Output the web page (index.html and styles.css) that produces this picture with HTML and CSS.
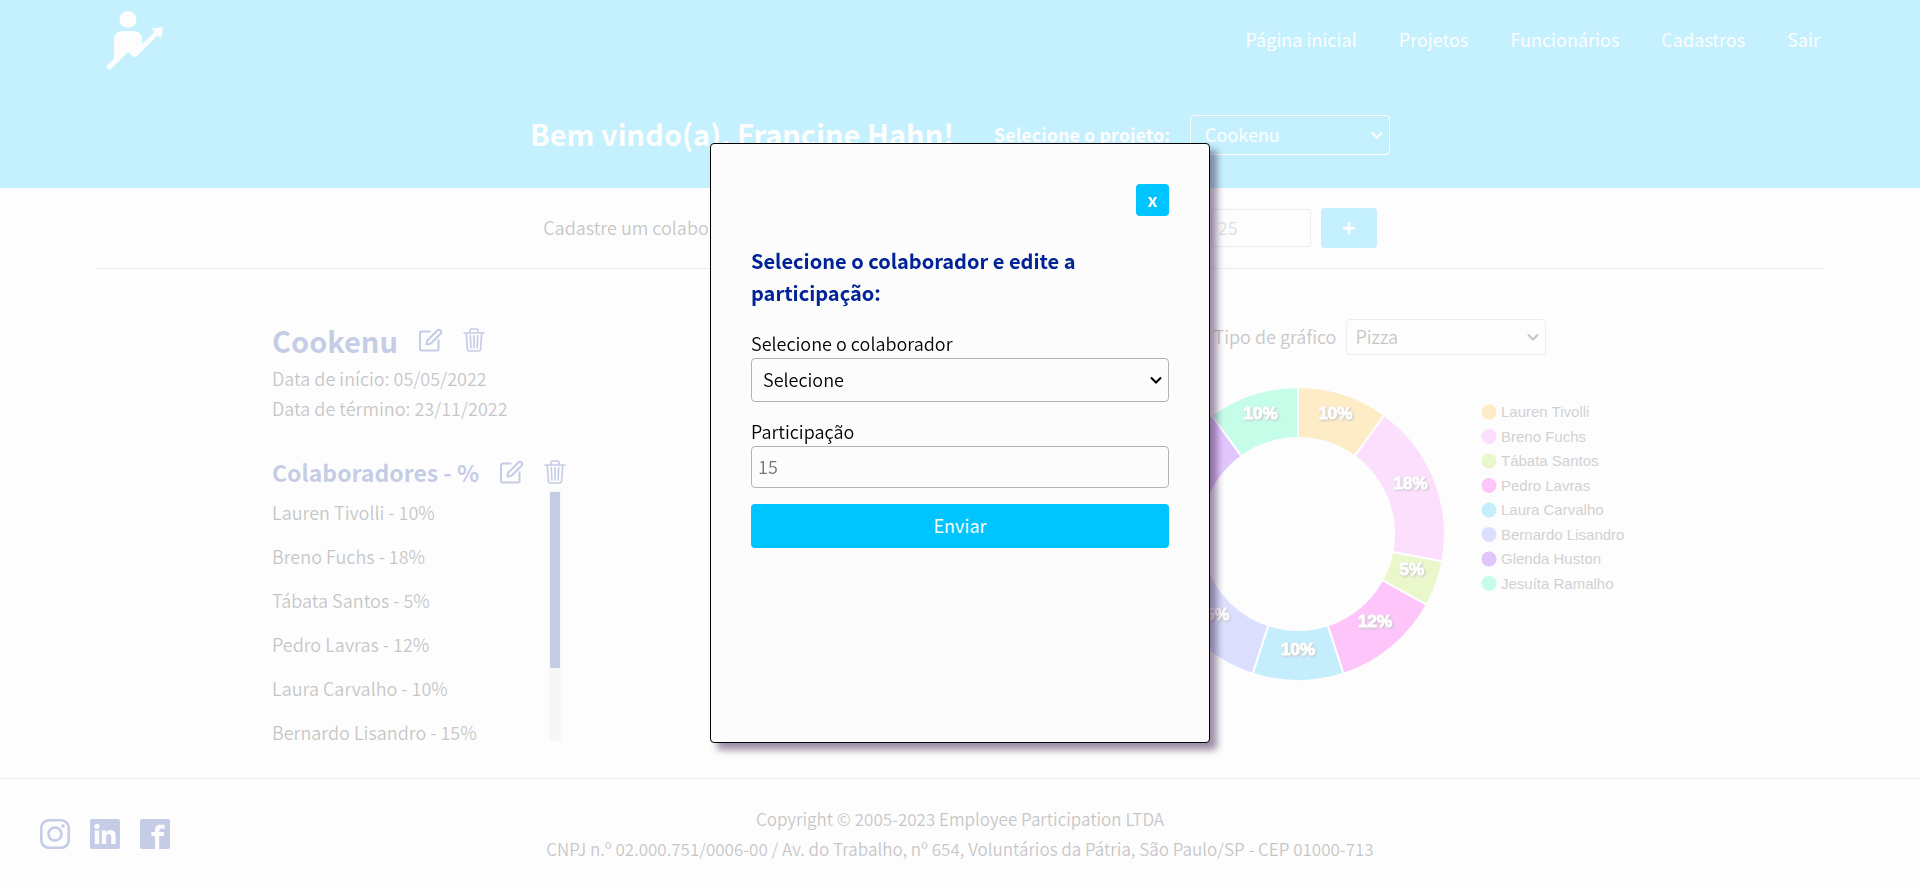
FILE: index.html
```html
<!DOCTYPE html>
<html lang="pt-BR">
<head>
<meta charset="utf-8">
<meta name="viewport" content="width=device-width, initial-scale=1">
<title>Employee Participation</title>
<link rel="stylesheet" href="styles.css">
</head>
<body>
<svg class="sprite" aria-hidden="true">
  <symbol id="edit" viewBox="0 0 24 24">
    <path d="M12.500 3.500H3.500A1.500 1.500 0 0 0 2 5V21A1.500 1.500 0 0 0 3.500 22.500H19A1.500 1.500 0 0 0 20.500 21V11.500M8.500 16.500L9.300 12.500L19.300 2.500A2.200 2.200 0 0 1 22.500 5.700L12.500 15.700Z" fill="none" stroke="currentColor" stroke-width="2" stroke-linejoin="round"/>
  </symbol>
  <symbol id="trash" viewBox="0 0 24 24">
    <path d="M2 5H22M8 5V2.500A1.500 1.500 0 0 1 9.500 1H14.500A1.500 1.500 0 0 1 16 2.500V5M4.300 5L5.400 21A2.100 2.100 0 0 0 7.500 23H16.500A2.100 2.100 0 0 0 18.600 21L19.700 5M8.300 7.800L8.900 20M12 7.800V20M15.700 7.800L15.100 20" fill="none" stroke="currentColor" stroke-width="1.600" stroke-linecap="round"/>
  </symbol>
</svg>

<div class="page">
  <header class="header">
    <div class="topbar">
      <svg class="logo" viewBox="0 0 66 66" role="img" aria-label="Employee Participation">
        <circle cx="28" cy="15.500" r="8.500"/>
        <path d="M14 36Q14 27 23 27H33Q42 27 42 36V40L54.500 28L51.500 24.500L63 23L61 34L57.500 31.500L37 52Q34.500 54 32 51.500L28 48L11 65Q8 66 7 64Q6 62 8 60L14 55Z"/>
      </svg>
      <nav class="nav">
        <a href="#">Página inicial</a>
        <a href="#">Projetos</a>
        <a href="#">Funcionários</a>
        <a href="#">Cadastros</a>
        <a href="#">Sair</a>
      </nav>
    </div>
    <div class="welcome">
      <h1>Bem vindo(a), Francine Hahn!</h1>
      <div class="project-picker">
        <label for="project">Selecione o projeto:</label>
        <select id="project"><option>Cookenu</option></select>
      </div>
    </div>
  </header>

  <form class="register">
    <label for="employee">Cadastre um colaborador no projeto:</label>
    <select id="employee"><option>Selecione</option></select>
    <input type="text" placeholder="25" aria-label="Participação em %">
    <button type="button">+</button>
  </form>

  <main class="main">
    <section class="details">
      <div class="title-row">
        <h2>Cookenu</h2>
        <button type="button" class="icon-button" aria-label="Editar projeto"><svg><use href="#edit"/></svg></button>
        <button type="button" class="icon-button" aria-label="Excluir projeto"><svg><use href="#trash"/></svg></button>
      </div>
      <p>Data de início: 05/05/2022</p>
      <p>Data de término: 23/11/2022</p>
      <div class="title-row team-title">
        <h3>Colaboradores - %</h3>
        <button type="button" class="icon-button" aria-label="Editar colaborador"><svg><use href="#edit"/></svg></button>
        <button type="button" class="icon-button" aria-label="Excluir colaborador"><svg><use href="#trash"/></svg></button>
      </div>
      <div class="team-box">
        <ul class="team">
          <li>Lauren Tivolli - 10%</li>
          <li>Breno Fuchs - 18%</li>
          <li>Tábata Santos - 5%</li>
          <li>Pedro Lavras - 12%</li>
          <li>Laura Carvalho - 10%</li>
          <li>Bernardo Lisandro - 15%</li>
          <li>Glenda Huston - 20%</li>
          <li>Jesuíta Ramalho - 10%</li>
        </ul>
        <div class="track" aria-hidden="true"><div class="thumb"></div></div>
      </div>
    </section>

    <section class="chart">
      <div class="chart-picker">
        <label for="chart-type">Tipo de gráfico</label>
        <select id="chart-type"><option>Pizza</option></select>
      </div>
      <svg class="donut" viewBox="0 0 536 300" role="img" aria-label="Participação por colaborador">
        <g class="slices" id="slices"></g>
        <g class="values" id="values"></g>
        <g class="legend" id="legend"></g>
      </svg>
    </section>
  </main>

  <footer class="footer">
    <div class="social">
      <a href="#" aria-label="Instagram"><svg viewBox="0 0 30 30"><rect x="1.300" y="1.300" width="27.400" height="27.400" rx="7.500" fill="none" stroke="currentColor" stroke-width="2.600"/><circle cx="15" cy="15" r="6.500" fill="none" stroke="currentColor" stroke-width="2.600"/><circle cx="23" cy="7" r="1.800" fill="currentColor"/></svg></a>
      <a href="#" aria-label="LinkedIn"><svg viewBox="0 0 30 30"><rect width="30" height="30" rx="2" fill="currentColor"/><g class="cut"><circle cx="7" cy="7.300" r="2.600"/><path d="M4.800 11.500H9.200V25H4.800ZM11.800 11.500H16V13.400C17.200 11.600 18.600 11.100 20.300 11.100C24.600 11.100 25.600 13.900 25.600 17.600V25H21.200V18.400C21.200 16.600 21 14.900 18.900 14.900C16.700 14.900 16.200 16.500 16.200 18.300V25H11.800Z"/></g></svg></a>
      <a href="#" aria-label="Facebook"><svg viewBox="0 0 30 30"><rect width="30" height="30" rx="2" fill="currentColor"/><path class="cut" d="M15 30V17H11.300V13H15V11C15 7.500 17.100 5.800 20.700 5.800H24.600V9.800H21.500C19.700 9.800 19.200 10.400 19.200 11.800V13H24.300L23.700 17H19.200V30Z"/></svg></a>
    </div>
    <div class="legal">
      <p>Copyright © 2005-2023 Employee Participation LTDA</p>
      <p>CNPJ n.º 02.000.751/0006-00 / Av. do Trabalho, nº 654, Voluntários da Pátria, São Paulo/SP - CEP 01000-713</p>
    </div>
  </footer>
</div>

<div class="backdrop">
  <form class="modal" role="dialog" aria-modal="true" aria-labelledby="modal-title">
    <button type="button" class="close" aria-label="Fechar">x</button>
    <h4 id="modal-title">Selecione o colaborador e edite a participação:</h4>
    <div class="field">
      <label for="modal-employee">Selecione o colaborador</label>
      <select id="modal-employee"><option>Selecione</option></select>
    </div>
    <div class="field">
      <label for="modal-share">Participação</label>
      <input id="modal-share" type="text" placeholder="15">
    </div>
    <button type="button" class="submit">Enviar</button>
  </form>
</div>
<script src="chart.js"></script>
</body>
</html>
```

FILE: styles.css
```css
:root {
  --blue: #00c4fd;
  --navy: #002396;
  --paper: #fcfcfc;
  --line: #b3b3b3;
}
* { box-sizing: border-box; margin: 0; padding: 0; }
body {
  background: var(--paper);
  color: #000;
  font: 350 18px/30px "Noto Sans CJK SC", sans-serif;
}
button, input, select { font: inherit; color: inherit; }
button { padding-bottom: 2px; border: 0; border-radius: 4px; background: var(--blue); color: var(--paper); }
input, select {
  border: 1px solid var(--line);
  border-radius: 4px;
  background: transparent;
}
input { padding: 0 6px 2px; }
input::placeholder { color: #757575; opacity: 1; }
select {
  padding: 0 24px 2px 8px;
  appearance: none;
  background: url("data:image/svg+xml,%3Csvg xmlns='http://www.w3.org/2000/svg' viewBox='0 0 12 8'%3E%3Cpath d='M1 1.500L6 6.500L11 1.500' fill='none' stroke='black' stroke-width='2'/%3E%3C/svg%3E") no-repeat right 6px center / 12px 8px;
}
a { color: inherit; text-decoration: none; }
.sprite { display: none; }

.page { display: flex; flex-direction: column; min-height: 100vh; }

.header { background: var(--blue); color: #fff; padding: 4px 5% 33px; }
.topbar { display: flex; align-items: center; justify-content: space-between; padding: 0 4px; }
.logo { width: 66px; height: 66px; fill: #fff; }
.nav { display: flex; gap: 42px; padding-top: 4px; font-weight: 400; }
.welcome { display: flex; justify-content: center; align-items: center; gap: 40px; margin-top: 45px; }
.welcome h1 { padding-bottom: 4px; font-size: 29px; line-height: 36px; }
.project-picker { display: flex; align-items: center; gap: 20px; font-weight: 700; }
.project-picker label { line-height: 28px; padding-bottom: 2px; }
.project-picker select {
  width: 200px;
  height: 40px;
  padding-left: 14px;
  border-color: #fff;
  font-weight: 400;
  background-image: url("data:image/svg+xml,%3Csvg xmlns='http://www.w3.org/2000/svg' viewBox='0 0 12 8'%3E%3Cpath d='M1 1.500L6 6.500L11 1.500' fill='none' stroke='white' stroke-width='2'/%3E%3C/svg%3E");
}
.project-picker option { color: #000; }

.register {
  display: flex;
  justify-content: center;
  align-items: center;
  gap: 10px;
  width: 90%;
  margin: 0 auto;
  padding: 20px 0;
  border-bottom: 1px solid var(--line);
}
.register label { line-height: 28px; padding-bottom: 2px; }
.register select { width: 342px; height: 38px; }
.register input { width: 100px; height: 38px; }
.register button { width: 56px; height: 40px; font-size: 23px; font-weight: 700; }

.main {
  display: flex;
  justify-content: space-between;
  flex: 1;
  width: 100%;
  max-width: 1376px;
  margin: 0 auto;
  padding: 48px 0 36px;
}
.title-row { display: flex; align-items: center; gap: 20px; color: var(--navy); }
.title-row h2 { font-size: 29px; line-height: 46px; }
.title-row h3 { font-size: 23px; line-height: 38px; }
.team-title { margin-top: 30px; }
.icon-button { display: flex; padding: 0; background: none; color: inherit; }
.icon-button svg { width: 24px; height: 24px; }
.team-box { display: flex; justify-content: space-between; width: 289px; height: 250px; }
.team { flex: 1; overflow-y: auto; list-style: none; scrollbar-width: none; }
.team li { padding: 6px 0 8px; }
.track { width: 12px; padding: 1px; background: #e4e4e4; }
.thumb { height: 71%; background: var(--navy); }

.chart { width: 536px; padding-top: 2px; }
.chart-picker { display: flex; justify-content: center; align-items: center; gap: 10px; }
.chart-picker label { line-height: 28px; padding-bottom: 2px; }
.chart-picker select { width: 200px; height: 36px; }
.donut { display: block; width: 100%; margin-top: 29px; }
.slices path { stroke: var(--paper); stroke-width: 2; }
.values text {
  fill: #fff;
  stroke: #fff;
  stroke-width: 1;
  font: 700 17px "Liberation Sans", Arial, sans-serif;
  text-anchor: middle;
  filter: drop-shadow(1px 1px 1px #000);
}
.legend text { fill: #333; font: 400 15px "Liberation Sans", Arial, sans-serif; }

.footer {
  display: grid;
  grid-template-columns: 1fr auto 1fr;
  align-items: center;
  padding: 25px 40px 24px;
  border-top: 1px solid var(--line);
}
.social { display: flex; gap: 20px; color: var(--navy); }
.social svg { display: block; width: 30px; height: 30px; }
.cut { fill: var(--paper); }
.legal { text-align: center; font-size: 17px; }

.backdrop {
  position: fixed;
  inset: 0;
  display: flex;
  align-items: center;
  justify-content: center;
  padding-bottom: 2px;
  background: rgba(252, 252, 252, .78);
}
.modal {
  display: flex;
  flex-direction: column;
  width: 500px;
  min-height: 600px;
  padding: 40px;
  border: 1px solid #000;
  border-radius: 4px;
  background: var(--paper);
  box-shadow: 7px 7px 7px rgba(40, 10, 60, .45);
}
.close { align-self: flex-end; width: 33px; height: 32px; line-height: 24px; font-weight: 700; }
.modal h4 { margin: 29px 0 21px; color: var(--navy); font-size: 20px; line-height: 32px; font-weight: 700; }
.field { display: flex; flex-direction: column; margin-bottom: 16px; }
.field label { line-height: 26px; padding-bottom: 2px; }
.field select { height: 44px; padding-left: 11px; }
.field input { height: 42px; }
.submit { height: 44px; font-weight: 400; }
```

FILE: chart.js
```js
const team = [
  ["Lauren Tivolli", 10, "#ffb300"],
  ["Breno Fuchs", 18, "#f878ff"],
  ["Tábata Santos", 5, "#a5e11d"],
  ["Pedro Lavras", 12, "#fc00ee"],
  ["Laura Carvalho", 10, "#00b9ff"],
  ["Bernardo Lisandro", 15, "#6678fc"],
  ["Glenda Huston", 20, "#8000ff"],
  ["Jesuíta Ramalho", 10, "#00ffa0"]
];
const cx = 186, cy = 150, outer = 147, inner = 96, labelRadius = 121;

function point(share, radius) {
  const angle = share / 100 * 2 * Math.PI;
  return [cx + radius * Math.sin(angle), cy - radius * Math.cos(angle)];
}
function add(parent, name, attributes, text) {
  const node = document.createElementNS("http://www.w3.org/2000/svg", name);
  for (const key in attributes) node.setAttribute(key, attributes[key]);
  if (text) node.textContent = text;
  document.getElementById(parent).appendChild(node);
}

let start = 0;
team.forEach(([name, share, color], i) => {
  const end = start + share;
  add("slices", "path", {
    fill: color,
    d: `M${point(start, outer)}A${outer},${outer} 0 0 1 ${point(end, outer)}L${point(end, inner)}A${inner},${inner} 0 0 0 ${point(start, inner)}Z`
  });
  const [x, y] = point(start + share / 2, labelRadius);
  add("values", "text", { x, y }, share + "%");
  const row = 28 + i * 24.5;
  add("legend", "circle", { cx: 377, cy: row, r: 7.5, fill: color });
  add("legend", "text", { x: 389, y: row + 5 }, name);
  start = end;
});
```
